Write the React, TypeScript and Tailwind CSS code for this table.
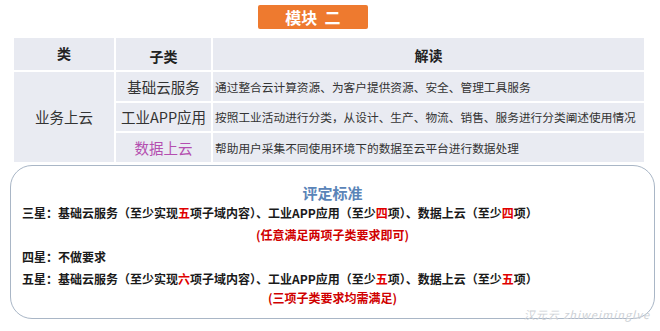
const cjk = { fontFamily: '"Noto Sans CJK SC", "Noto Sans", sans-serif' };

function Red({ children }: { children: React.ReactNode }) {
  return <span className="text-[#e00000]">{children}</span>;
}

export default function App() {
  const rows = [
    {
      sub: "基础云服务",
      desc: "通过整合云计算资源、为客户提供资源、安全、管理工具服务",
      color: "text-[#333333]",
    },
    {
      sub: "工业APP应用",
      desc: "按照工业活动进行分类，从设计、生产、物流、销售、服务进行分类阐述使用情况",
      color: "text-[#333333]",
    },
    {
      sub: "数据上云",
      desc: "帮助用户采集不同使用环境下的数据至云平台进行数据处理",
      color: "text-[#b44fb0]",
    },
  ];

  return (
    <div className="relative w-[660px] h-[331px] bg-white overflow-hidden" style={cjk}>
      <div className="ml-[258px] mt-[5px] flex h-[24px] w-[110px] items-center justify-center rounded-[2px] bg-[#ee7a2f] text-[16px] font-bold text-white">
        模块&nbsp;&nbsp;二
      </div>

      <div className="ml-[14px] mt-[9px] grid w-[630px] grid-cols-[100px_95px_431px] grid-rows-[32px_29px_28px_29px] gap-[2px] bg-white">
        <div className="flex items-center justify-center bg-[#e8eaf1] pb-[2px] text-[14px] font-bold text-[#222]">
          类
        </div>
        <div className="flex items-center justify-center bg-[#e8eaf1] pt-[4px] text-[14px] font-bold text-[#222]">
          子类
        </div>
        <div className="flex items-center justify-center bg-[#e8eaf1] pt-[2px] text-[14px] font-bold text-[#222]">
          解读
        </div>

        <div className="row-span-3 flex items-center justify-center bg-[#e9ebf2] text-[14.5px] text-[#333]">
          业务上云
        </div>
        {rows.map((r) => (
          <>
            <div
              key={r.sub + "a"}
              className={`flex items-center justify-center bg-[#e9ebf2] text-[14.5px] ${r.color}`}
            >
              {r.sub}
            </div>
            <div
              key={r.sub + "b"}
              className="flex items-center bg-[#e9ebf2] pl-[2px] text-[11.7px] text-[#333]"
            >
              {r.desc}
            </div>
          </>
        ))}
      </div>

      <div className="ml-[10px] mt-[3px] h-[154px] w-[645px] rounded-[22px] border border-[#a9b6c6] text-[12px] font-bold text-[#1a1a1a]">
        <div className="mt-[16px] flex h-[22px] items-center justify-center text-[15px] text-[#5a84b8]">
          评定标准
        </div>
        <div className="flex h-[18px] items-center pl-[11px]">
          三星：基础云服务（至少实现<Red>五</Red>项子域内容）、工业APP应用（至少<Red>四</Red>项）、数据上云（至少<Red>四</Red>项）
        </div>
        <div className="flex h-[26px] items-center justify-center text-[#d00000]">
          (任意满足两项子类要求即可)
        </div>
        <div className="flex h-[18px] items-center pl-[11px]">四星：不做要求</div>
        <div className="flex h-[26px] items-center pl-[11px]">
          五星：基础云服务（至少实现<Red>六</Red>项子域内容）、工业APP应用（至少<Red>五</Red>项）、数据上云（至少<Red>五</Red>项）
        </div>
        <div className="flex h-[12px] items-center justify-center text-[#d00000]">
          (三项子类要求均需满足)
        </div>
      </div>

      <div className="absolute right-[10px] top-[306px] text-[11px] font-normal italic tracking-[1px] text-[#cdd1d6]">
        汉元云 zhiweiminglve
      </div>
    </div>
  );
}
